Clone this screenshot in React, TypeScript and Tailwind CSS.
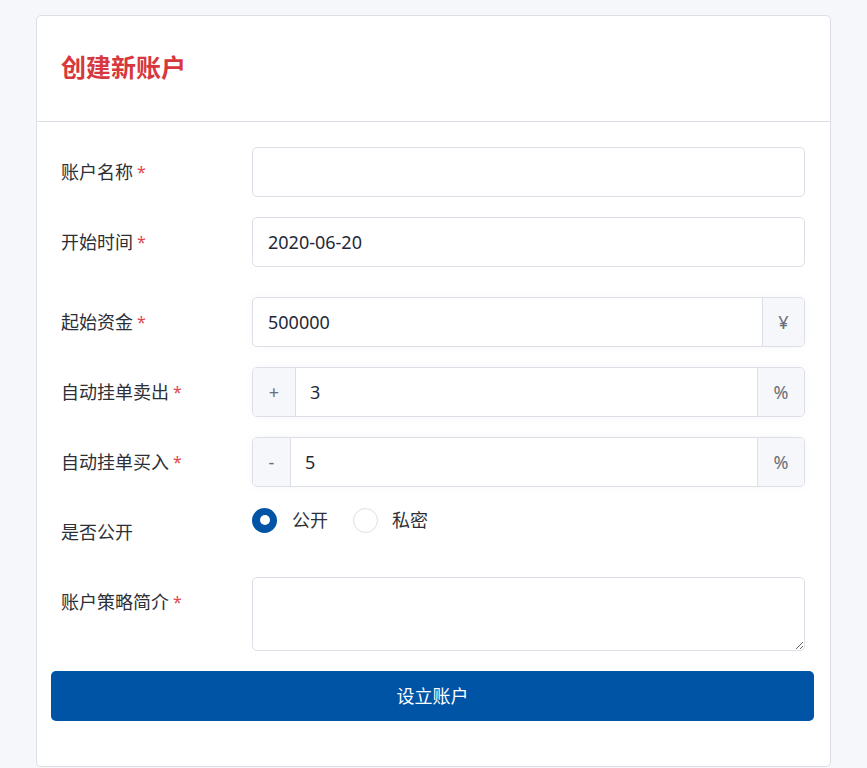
import React from "react";

const font = { fontFamily: '"Noto Sans", "Noto Sans CJK SC", sans-serif' };

function Label({ text, required }: { text: string; required?: boolean }) {
  return (
    <div className="w-[191px] shrink-0 h-[50px] flex items-center text-[18px] text-[#2c2f36]">
      <span>{text}</span>
      {required && <span className="text-[#e0474c] ml-[4px] text-[16px]">*</span>}
    </div>
  );
}

function Addon({ children, side, w }: { children: React.ReactNode; side: "l" | "r"; w: string }) {
  return (
    <div
      className={
        "h-full flex items-center justify-center bg-[#f5f7fa] text-[#6b6e75] text-[18px] shrink-0 " +
        w +
        (side === "l" ? " border-r border-[#dcdfe6]" : " border-l border-[#dcdfe6]")
      }
    >
      {children}
    </div>
  );
}

export default function App() {
  return (
    <div className="min-h-[768px] bg-[#f6f7fb] pt-[15px] px-[36px] pb-0" style={font}>
      <div className="bg-white border border-[#dcdfe6] rounded-[5px] h-[752px]">
        <div className="h-[106px] border-b border-[#dcdfe6] flex items-center pl-[24px] pb-[2px]">
          <h1 className="text-[25px] font-bold text-[#d7383d] leading-none">创建新账户</h1>
        </div>

        <div className="pl-[24px] pr-[25px] pt-[25px]">
          <div className="flex items-start">
            <Label text="账户名称" required />
            <input
              className="flex-1 h-[50px] border border-[#dcdfe6] rounded-[5px] px-[16px] text-[18px] text-[#1f2937] outline-none"
              defaultValue=""
            />
          </div>

          <div className="flex items-start mt-[20px]">
            <Label text="开始时间" required />
            <input
              className="flex-1 h-[50px] border border-[#dcdfe6] rounded-[5px] px-[15px] text-[18px] text-[#1f2937] outline-none"
              defaultValue="2020-06-20"
            />
          </div>

          <div className="flex items-start mt-[30px]">
            <Label text="起始资金" required />
            <div className="flex-1 h-[50px] flex border border-[#dcdfe6] rounded-[5px] overflow-hidden shadow-[0_0_12px_rgba(0,0,0,0.035)]">
              <input
                className="flex-1 min-w-0 h-full px-[15px] text-[18px] text-[#1f2937] outline-none"
                defaultValue="500000"
              />
              <Addon side="r" w="w-[42px]">¥</Addon>
            </div>
          </div>

          <div className="flex items-start mt-[20px]">
            <Label text="自动挂单卖出" required />
            <div className="flex-1 h-[50px] flex border border-[#dcdfe6] rounded-[5px] overflow-hidden shadow-[0_0_12px_rgba(0,0,0,0.035)]">
              <Addon side="l" w="w-[43px]">+</Addon>
              <input
                className="flex-1 min-w-0 h-full px-[14px] text-[18px] text-[#1f2937] outline-none"
                defaultValue="3"
              />
              <Addon side="r" w="w-[47px]">%</Addon>
            </div>
          </div>

          <div className="flex items-start mt-[20px]">
            <Label text="自动挂单买入" required />
            <div className="flex-1 h-[50px] flex border border-[#dcdfe6] rounded-[5px] overflow-hidden shadow-[0_0_12px_rgba(0,0,0,0.035)]">
              <Addon side="l" w="w-[38px]">-</Addon>
              <input
                className="flex-1 min-w-0 h-full px-[14px] text-[18px] text-[#1f2937] outline-none"
                defaultValue="5"
              />
              <Addon side="r" w="w-[47px]">%</Addon>
            </div>
          </div>

          <div className="flex items-start mt-[20px]">
            <Label text="是否公开" />
            <div className="flex items-center h-[26px] text-[18px] text-[#2c2f36]">
              <span className="w-[25px] h-[25px] rounded-full bg-[#0054a6] flex items-center justify-center">
                <span className="w-[10px] h-[10px] rounded-full bg-white" />
              </span>
              <span className="ml-[15px]">公开</span>
              <span className="ml-[25px] w-[25px] h-[25px] rounded-full border border-[#dcdfe6] bg-white" />
              <span className="ml-[14px]">私密</span>
            </div>
          </div>

          <div className="flex items-start mt-[20px]">
            <Label text="账户策略简介" required />
            <textarea className="flex-1 h-[74px] border border-[#dcdfe6] rounded-[5px] px-[15px] py-[10px] text-[18px] outline-none block" />
          </div>
        </div>

        <div className="pl-[14px] pr-[16px] mt-[20px]">
          <button className="w-full h-[50px] rounded-[5px] bg-[#0054a6] text-white text-[18px]">
            设立账户
          </button>
        </div>
      </div>
    </div>
  );
}
